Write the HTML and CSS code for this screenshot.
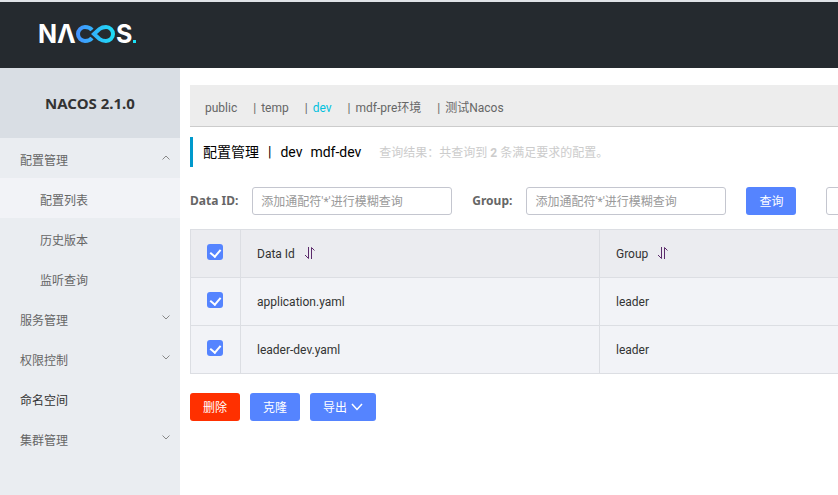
FILE: index.html
```html
<!DOCTYPE html>
<html lang="zh-CN">
<head>
<meta charset="utf-8">
<title>Nacos</title>
<link rel="stylesheet" href="styles.css">
</head>
<body>
<header class="topbar">
  <a class="logo" href="#" aria-label="Nacos">
    <svg width="100" height="36" viewBox="-2 -6 100 36">
      <defs>
        <linearGradient id="loop" gradientUnits="userSpaceOnUse" x1="36" y1="0" x2="76" y2="0">
          <stop offset="0" stop-color="#4590ff"/>
          <stop offset="1" stop-color="#1be1f6"/>
        </linearGradient>
      </defs>
      <text class="logo-letter" x="-2" y="20">N</text>
      <text class="logo-letter" x="17" y="20">Λ</text>
      <path fill="none" stroke="url(#loop)" stroke-width="4" d="M52 7C50 4.500 47.500 4 45 4A7 7 0 0 0 45 18C47.500 18 50 17.500 52 15M54 11L59.500 6C61.500 4.500 64 4 66 4A7 7 0 0 1 66 18C64 18 61.500 17.500 59.500 16Z"/>
      <text class="logo-letter" x="76" y="20">S</text>
      <rect x="93" y="17" width="3" height="3" fill="#1be1f6"/>
    </svg>
  </a>
</header>
<div class="layout">
  <aside class="sidebar">
    <h1 class="version">NACOS 2.1.0</h1>
    <nav class="menu">
      <a class="item" href="#">配置管理<svg class="arrow" viewBox="0 0 8 5"><path d="M.5 4.500 4 1 7.500 4.500"/></svg></a>
      <a class="item sub active" href="#">配置列表</a>
      <a class="item sub" href="#">历史版本</a>
      <a class="item sub" href="#">监听查询</a>
      <a class="item" href="#">服务管理<svg class="arrow" viewBox="0 0 8 5"><path d="M.5.5 4 4 7.500.5"/></svg></a>
      <a class="item" href="#">权限控制<svg class="arrow" viewBox="0 0 8 5"><path d="M.5.5 4 4 7.500.5"/></svg></a>
      <a class="item leaf" href="#">命名空间</a>
      <a class="item" href="#">集群管理<svg class="arrow" viewBox="0 0 8 5"><path d="M.5.5 4 4 7.500.5"/></svg></a>
    </nav>
  </aside>
  <main class="content">
    <nav class="namespaces">
      <a href="#">public</a><a href="#">temp</a><a class="current" href="#">dev</a><a href="#">mdf-pre环境</a><a href="#">测试Nacos</a>
    </nav>
    <div class="heading">
      <h2>配置管理</h2><span class="bar">|</span><span>dev</span><span class="ns-id">mdf-dev</span>
      <p class="result">查询结果：共查询到 <strong>2</strong> 条满足要求的配置。</p>
    </div>
    <form class="search">
      <label for="data-id">Data ID:</label>
      <input class="field" id="data-id" type="text" placeholder="添加通配符'*'进行模糊查询">
      <label class="group-label" for="group">Group:</label>
      <input class="field" id="group" type="text" placeholder="添加通配符'*'进行模糊查询">
      <button class="btn" type="button">查询</button>
      <button class="btn plain" type="button" aria-label="高级查询"></button>
    </form>
    <table class="configs">
      <thead>
        <tr>
          <th class="pick"><input type="checkbox" checked aria-label="全选"></th>
          <th class="data-id">Data Id<svg class="sort" viewBox="0 0 11 12"><path d="M4.500 0V11.500L1 8M7.500 12V.5L10.500 3.500"/></svg></th>
          <th>Group<svg class="sort" viewBox="0 0 11 12"><path d="M4.500 0V11.500L1 8M7.500 12V.5L10.500 3.500"/></svg></th>
        </tr>
      </thead>
      <tbody>
        <tr>
          <td class="pick"><input type="checkbox" checked aria-label="application.yaml"></td>
          <td>application.yaml</td>
          <td>leader</td>
        </tr>
        <tr>
          <td class="pick"><input type="checkbox" checked aria-label="leader-dev.yaml"></td>
          <td>leader-dev.yaml</td>
          <td>leader</td>
        </tr>
      </tbody>
    </table>
    <div class="actions">
      <button class="btn danger" type="button">删除</button>
      <button class="btn" type="button">克隆</button>
      <button class="btn" type="button">导出<svg class="caret" viewBox="0 0 12 8"><path d="M1 1 6 6.500 11 1"/></svg></button>
    </div>
  </main>
</div>
</body>
</html>
```
FILE: styles.css
```css
* {
  box-sizing: border-box;
}

body {
  display: flex;
  flex-direction: column;
  min-height: 100vh;
  margin: 0;
  overflow-x: hidden;
  background: #fff;
  color: #333;
  font: 12px/20px Roboto, "Noto Sans CJK SC", sans-serif;
}

a {
  color: inherit;
  text-decoration: none;
}

input,
button {
  font: inherit;
}

.topbar {
  display: flex;
  align-items: center;
  height: 68px;
  padding-left: 38px;
  border-top: 2px solid #dfe3e7;
  background: #252a2f;
}

.logo,
.logo svg {
  display: block;
}

.logo-letter {
  fill: #fff;
  font: 700 25px Inter, sans-serif;
}

.layout {
  display: flex;
  flex: 1;
}

.sidebar {
  flex: 0 0 180px;
  background: #eaedf1;
}

.version {
  margin: 0;
  background: #d9dee4;
  font-family: "Noto Sans", sans-serif;
  font-size: 15px;
  line-height: 70px;
  text-align: center;
}

.item {
  display: flex;
  align-items: center;
  justify-content: space-between;
  height: 40px;
  padding: 6px 10px 0 20px;
  color: #666;
}

.sub {
  padding-left: 40px;
}

.active {
  background: #f2f3f7;
}

.leaf {
  color: #333;
}

.arrow {
  width: 8px;
  height: 5px;
  margin-bottom: 8px;
  fill: none;
  stroke: #888;
}

.content {
  flex: 1;
  min-width: 0;
  padding: 17px 0 20px 10px;
  overflow: hidden;
}

.namespaces {
  display: flex;
  height: 42px;
  padding: 2px 15px 0;
  border-bottom: 1px solid #ccc;
  background: #ededed;
  color: #666;
  line-height: 42px;
  white-space: nowrap;
}

.namespaces a + a::before {
  content: "|";
  margin: 0 5px 0 16px;
  color: #666;
}

.namespaces .current {
  color: #00c1de;
}

.heading {
  display: flex;
  align-items: center;
  height: 30px;
  margin: 10px 0 20px;
  padding-left: 10px;
  border-left: 3px solid #09c;
  color: #000;
  font-size: 14px;
  white-space: nowrap;
}

.heading h2 {
  margin: 0;
  font-size: 14px;
  font-weight: 400;
}

.bar {
  margin: 0 9px;
}

.ns-id {
  margin-left: 8px;
}

.result {
  margin: 2px 0 0 18px;
  color: #ccc;
  font-size: 12px;
}

.search {
  display: flex;
  align-items: center;
  height: 28px;
}

.search label {
  flex: none;
  margin-right: 14px;
  color: #666;
  font-family: "Noto Sans", sans-serif;
  font-weight: 700;
}

.search .group-label {
  margin-left: 20px;
}

.field {
  flex: 0 0 200px;
  width: 200px;
  height: 28px;
  padding: 2px 8px 0;
  border: 1px solid #c4c6cf;
  border-radius: 3px;
  background: #fff;
}

.field::placeholder {
  color: #999;
}

.btn {
  display: flex;
  flex: none;
  align-items: center;
  height: 28px;
  padding: 2px 13px 0;
  border: 0;
  border-radius: 3px;
  background: #5584ff;
  color: #fff;
}

.search .btn {
  margin-left: 20px;
}

.search .plain {
  width: 74px;
  margin-left: 30px;
  border: 1px solid #c4c6cf;
  background: #fff;
}

.actions .danger {
  background: #ff3000;
}

.configs {
  width: 100%;
  margin-top: 14px;
  border-collapse: collapse;
  table-layout: fixed;
}

.configs th,
.configs td {
  height: 48px;
  padding: 0 16px;
  border: 1px solid #dcdee3;
  background: #f2f3f7;
  font-weight: 400;
  text-align: left;
}

.configs th {
  background: #ebecf0;
}

.configs th:last-child,
.configs td:last-child {
  border-right: 0;
}

.configs .pick {
  width: 50px;
}

.configs .data-id {
  width: 359px;
}

.pick input {
  display: flex;
  justify-content: center;
  width: 16px;
  height: 16px;
  margin: 0 0 3px;
  border-radius: 3px;
  background: #5584ff;
  appearance: none;
}

.pick input:checked::after {
  content: "";
  width: 5px;
  height: 8px;
  margin-top: 3px;
  border: solid #fff;
  border-width: 0 2px 2px 0;
  transform: rotate(40deg);
}

.sort {
  width: 11px;
  height: 12px;
  margin-left: 9px;
  fill: none;
  stroke: #5b2a6b;
  vertical-align: -1px;
}

.actions {
  display: flex;
  gap: 10px;
  margin-top: 19px;
}

.caret {
  width: 12px;
  height: 8px;
  margin: 0 0 2px 4px;
  fill: none;
  stroke: #fff;
  stroke-width: 1.5;
}
```
